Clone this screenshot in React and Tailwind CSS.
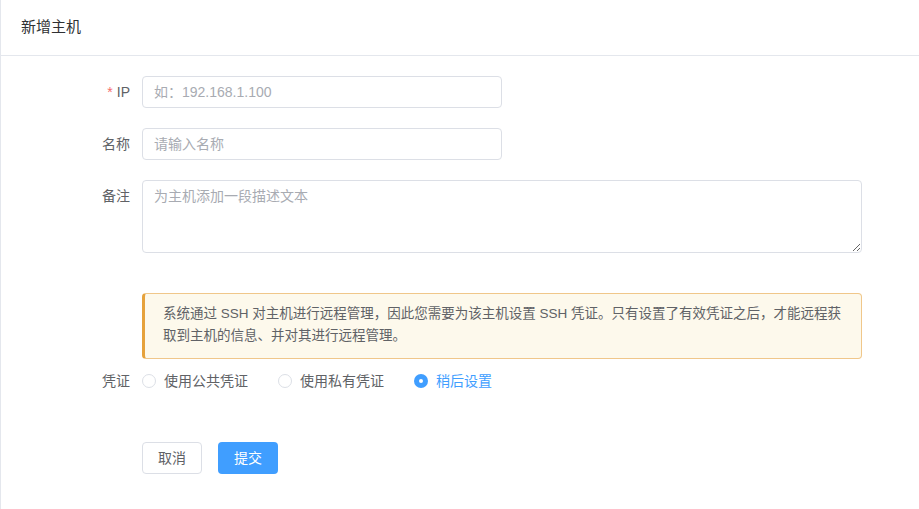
export default function App() {
  const font = { fontFamily: '"Liberation Sans", Arial, "Noto Sans CJK SC", sans-serif' };
  const Radio = ({ label, checked }) => (
    <label className="flex items-center gap-[8px] mr-[30px]">
      {checked ? (
        <span className="w-[14px] h-[14px] rounded-full bg-[#409eff] flex items-center justify-center">
          <span className="w-[4px] h-[4px] rounded-full bg-white" />
        </span>
      ) : (
        <span className="w-[14px] h-[14px] rounded-full border border-[#dcdfe6] bg-white" />
      )}
      <span className={checked ? "text-[#409eff]" : "text-[#606266]"}>{label}</span>
    </label>
  );
  return (
    <div style={font} className="w-[919px] h-[509px] bg-white border-l border-[#e4e7ed] text-[14px] text-[#606266] overflow-hidden">
      <div className="h-[56px] border-b border-[#e4e7ed] flex items-center pl-[20px] text-[15px] text-[#303133]">新增主机</div>
      <div className="pt-[20px]">
        <div className="flex items-center h-[32px]">
          <div className="w-[129px] text-right pr-0 mr-[12px]"><span className="text-[#f56c6c] mr-[4px]">*</span>IP</div>
          <input className="w-[360px] h-[32px] border border-[#dcdfe6] rounded-[4px] px-[11px] outline-none placeholder:text-[#a8abb2]" placeholder="如：192.168.1.100" />
        </div>
        <div className="flex items-center h-[32px] mt-[20px]">
          <div className="w-[129px] text-right mr-[12px]">名称</div>
          <input className="w-[360px] h-[32px] border border-[#dcdfe6] rounded-[4px] px-[11px] outline-none placeholder:text-[#a8abb2]" placeholder="请输入名称" />
        </div>
        <div className="flex items-start mt-[20px]">
          <div className="w-[129px] text-right mr-[12px] leading-[32px]">备注</div>
          <textarea className="w-[720px] h-[73px] border border-[#dcdfe6] rounded-[4px] px-[11px] py-[5px] outline-none placeholder:text-[#a8abb2] resize-y" placeholder="为主机添加一段描述文本" />
        </div>
        <div className="ml-[141px] mt-[40px] w-[720px] h-[66px] bg-[#fdf9ec] border border-[#f0c78a] border-l-[3px] border-l-[#e6a23c] rounded-[4px] px-[18px] py-[9px] text-[13.5px] leading-[22px] text-[#606266]">
          系统通过 SSH 对主机进行远程管理，因此您需要为该主机设置 SSH 凭证。只有设置了有效凭证之后，才能远程获取到主机的信息、并对其进行远程管理。
        </div>
        <div className="flex items-center h-[32px] mt-[6px]">
          <div className="w-[129px] text-right mr-[12px]">凭证</div>
          <Radio label="使用公共凭证" />
          <Radio label="使用私有凭证" />
          <Radio label="稍后设置" checked />
        </div>
        <div className="flex ml-[141px] mt-[45px] gap-[16px]">
          <button className="w-[60px] h-[32px] border border-[#dcdfe6] rounded-[4px] bg-white text-[#606266]">取消</button>
          <button className="w-[60px] h-[32px] rounded-[4px] bg-[#409eff] text-white">提交</button>
        </div>
      </div>
    </div>
  );
}
